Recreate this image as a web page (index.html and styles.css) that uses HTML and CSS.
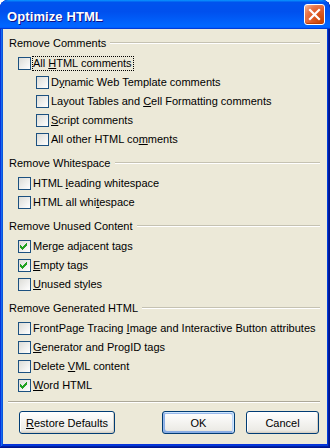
FILE: index.html
```html
<!DOCTYPE html>
<html>
<head>
<meta charset="utf-8">
<link rel="stylesheet" href="styles.css">
</head>
<body>
<div class="window">
  <div class="titlebar">
    <span class="title">Optimize HTML</span>
    <button class="close" aria-label="Close">
      <svg width="19" height="19" viewBox="0 0 19 19"><path d="M5 5 L14 14 M14 5 L5 14" stroke="#fff" stroke-width="2.2" stroke-linecap="square"/></svg>
    </button>
  </div>
  <div class="client">
    <section class="group">
      <div class="group-head"><span class="group-label">Remove Comments</span><span class="rule"></span></div>
      <div class="row"><span class="cb"></span><span class="txt focus">All <u>H</u>TML comments</span></div>
      <div class="row sub"><span class="cb"></span><span class="txt">D<u>y</u>namic Web Template comments</span></div>
      <div class="row sub"><span class="cb"></span><span class="txt">Layout Tables and <u>C</u>ell Formatting comments</span></div>
      <div class="row sub"><span class="cb"></span><span class="txt"><u>S</u>cript comments</span></div>
      <div class="row sub"><span class="cb"></span><span class="txt">All other HTML co<u>m</u>ments</span></div>
    </section>
    <section class="group">
      <div class="group-head"><span class="group-label">Remove Whitespace</span><span class="rule"></span></div>
      <div class="row"><span class="cb"></span><span class="txt">HTML <u>l</u>eading whitespace</span></div>
      <div class="row"><span class="cb"></span><span class="txt">HTML all whi<u>t</u>espace</span></div>
    </section>
    <section class="group">
      <div class="group-head"><span class="group-label">Remove Unused Content</span><span class="rule"></span></div>
      <div class="row"><span class="cb checked"><svg width="11" height="11" viewBox="0 0 11 11"><path class="tick" d="M7 2h1v1h-1z M6 3h2v1h-2z M1 4h1v1h-1z M5 4h3v1h-3z M1 5h2v1h-2z M4 5h3v1h-3z M1 6h5v1h-5z M2 7h3v1h-3z M3 8h1v1h-1z"/></svg></span><span class="txt">Merge ad<u>j</u>acent tags</span></div>
      <div class="row"><span class="cb checked"><svg width="11" height="11" viewBox="0 0 11 11"><path class="tick" d="M7 2h1v1h-1z M6 3h2v1h-2z M1 4h1v1h-1z M5 4h3v1h-3z M1 5h2v1h-2z M4 5h3v1h-3z M1 6h5v1h-5z M2 7h3v1h-3z M3 8h1v1h-1z"/></svg></span><span class="txt"><u>E</u>mpty tags</span></div>
      <div class="row"><span class="cb"></span><span class="txt"><u>U</u>nused styles</span></div>
    </section>
    <section class="group">
      <div class="group-head"><span class="group-label">Remove Generated HTML</span><span class="rule"></span></div>
      <div class="row"><span class="cb"></span><span class="txt">FrontPage Tracing <u>I</u>mage and Interactive Button attributes</span></div>
      <div class="row"><span class="cb"></span><span class="txt"><u>G</u>enerator and ProgID tags</span></div>
      <div class="row"><span class="cb"></span><span class="txt">Delete <u>V</u>ML content</span></div>
      <div class="row"><span class="cb checked"><svg width="11" height="11" viewBox="0 0 11 11"><path class="tick" d="M7 2h1v1h-1z M6 3h2v1h-2z M1 4h1v1h-1z M5 4h3v1h-3z M1 5h2v1h-2z M4 5h3v1h-3z M1 6h5v1h-5z M2 7h3v1h-3z M3 8h1v1h-1z"/></svg></span><span class="txt"><u>W</u>ord HTML</span></div>
    </section>
    <div class="sep"></div>
    <div class="buttons">
      <button class="btn wide"><u>R</u>estore Defaults</button>
      <span class="spacer"></span>
      <button class="btn default">OK</button>
      <button class="btn">Cancel</button>
    </div>
  </div>
</div>
</body>
</html>
```

FILE: styles.css
```css
html, body {
  margin: 0;
  padding: 0;
  background: #ffffff;
}

body {
  font-family: "Liberation Sans", Arial, sans-serif;
  font-size: 11px;
  color: #000;
}

.window {
  width: 330px;
  height: 448px;
  box-sizing: border-box;
  display: flex;
  flex-direction: column;
  border-radius: 8px 8px 0 0;
  overflow: hidden;
  background: #0831d9;
  box-shadow: inset -1px -1px #00138c, inset 1px 1px #0831d9, inset -2px -2px #001ea0, inset 2px 2px #166aee, inset -3px -3px #003bda, inset 3px 3px #0855dd;
  padding-bottom: 4px;
}

.titlebar {
  height: 29px;
  flex: 0 0 29px;
  display: flex;
  align-items: center;
  padding: 0 5px 0 7px;
  background: linear-gradient(180deg, #0997ff, #0053ee 8%, #0050ee 40%, #0066ff 88%, #0066ff 93%, #005bff 95%, #003dd7 96%, #003dd7);
  border-radius: 8px 8px 0 0;
}

.title {
  flex: 1;
  color: #fff;
  font-family: "Liberation Sans", Arial, sans-serif;
  font-weight: bold;
  font-size: 13px;
  letter-spacing: 0.1px;
  text-shadow: 1px 1px #0f1089;
  padding-top: 3px;
}

.close {
  width: 21px;
  height: 21px;
  padding: 0;
  margin: 0;
  border: 1px solid #fff;
  border-radius: 3px;
  display: flex;
  align-items: center;
  justify-content: center;
  background: radial-gradient(circle at 85% 85%, #c94400 0%, #e2602e 50%, #e8774b 70%, #f4a888 90%, #ffd7c4 100%);
  box-shadow: inset 0 -1px 1px #b83a00;
}

.close svg {
  display: block;
}

.client {
  flex: 1;
  margin: 0 3px;
  background: #ece9d8;
  padding: 7px 7px 0 6px;
  display: flex;
  flex-direction: column;
}

.group {
  display: flex;
  flex-direction: column;
  margin-bottom: 7px;
}

.group-head {
  display: flex;
  align-items: center;
  height: 14px;
  line-height: 14px;
  margin-bottom: 4px;
}

.group-label {
  white-space: nowrap;
}

.rule {
  flex: 1;
  height: 0;
  margin-left: 4px;
  border-top: 1px solid #c5c2b2;
  border-bottom: 1px solid #ffffff;
}

.row {
  display: flex;
  align-items: center;
  height: 19px;
  padding-left: 9px;
}

.row.sub {
  padding-left: 27px;
}

.cb {
  width: 13px;
  height: 13px;
  box-sizing: border-box;
  border: 1px solid #1c5180;
  background: linear-gradient(135deg, #dcdcd7 0%, #ffffff 100%);
  flex: 0 0 13px;
}

.cb svg {
  display: block;
}

.tick {
  fill: #21a121;
}

.txt {
  margin-left: 1px;
  border: 1px dotted transparent;
  line-height: 13px;
  padding: 0 1px 0 0;
  white-space: nowrap;
}

.txt.focus {
  border-color: #000;
}

u {
  text-decoration: underline;
  text-underline-offset: 1px;
}

.sep {
  margin: -1px 0 0 -1px;
  border-top: 1px solid #aca899;
  border-bottom: 1px solid #ffffff;
}

.buttons {
  display: flex;
  margin-top: 8px;
  padding: 0 1px 0 10px;
  gap: 11px;
}

.spacer {
  flex: 1;
}

.btn {
  font-family: "Liberation Sans", Arial, sans-serif;
  font-size: 11px;
  color: #000;
  height: 23px;
  width: 73px;
  padding: 0;
  border: 1px solid #003c74;
  border-radius: 3px;
  background: linear-gradient(180deg, #ffffff, #ecebe6 86%, #d6d0c5);
  box-shadow: inset -1px -1px #d6d0c5, inset 1px 1px #fff;
}

.btn.wide {
  width: 96px;
}

.btn.default {
  box-shadow: inset -1px 1px #cee7ff, inset 1px 2px #98b8ea, inset -2px 2px #bcd4f6, inset 1px -1px #89ade4, inset 2px -2px #89ade4;
}
```
